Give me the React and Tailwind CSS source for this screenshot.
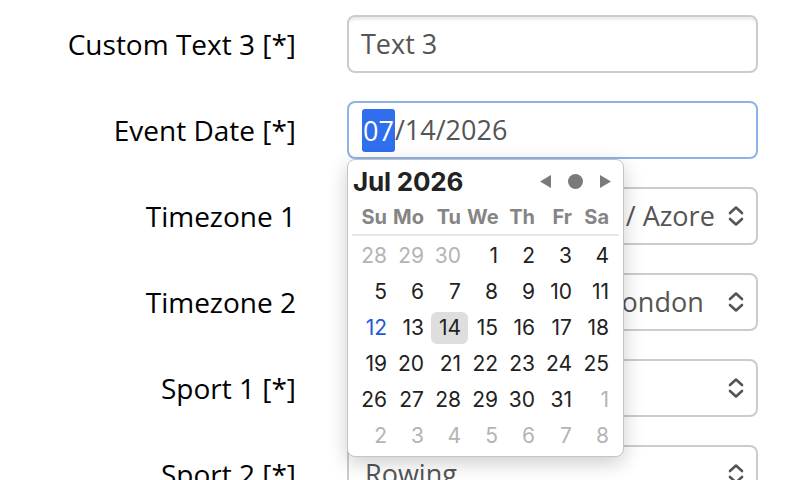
import React from "react";

const Chevron = () => (
  <svg width="16" height="22" viewBox="0 0 16 22" fill="none" stroke="#555" strokeWidth="2.6" strokeLinecap="round" strokeLinejoin="round">
    <path d="M2 8 L8 2.5 L14 8" />
    <path d="M2 14 L8 19.5 L14 14" />
  </svg>
);

const Row = ({ label, children }) => (
  <div className="flex items-center h-[58px]">
    <div className="w-[297px] text-right text-[28px] text-black pr-[1px] whitespace-nowrap">{label}</div>
    <div className="ml-[50px] w-[411px] h-full">{children}</div>
  </div>
);

const SelectBox = ({ value }) => (
  <div className="h-full w-full rounded-lg border-2 border-[#cccccc] bg-white flex items-center pl-[16px] pr-[12px]">
    <div className="flex-1 overflow-hidden whitespace-nowrap text-[#555] text-[27px]">{value}</div>
    <div className="ml-[12px]"><Chevron /></div>
  </div>
);

const weeks = [
  [["28", "o"], ["29", "o"], ["30", "o"], ["1"], ["2"], ["3"], ["4"]],
  [["5"], ["6"], ["7"], ["8"], ["9"], ["10"], ["11"]],
  [["12", "t"], ["13"], ["14", "s"], ["15"], ["16"], ["17"], ["18"]],
  [["19"], ["20"], ["21"], ["22"], ["23"], ["24"], ["25"]],
  [["26"], ["27"], ["28"], ["29"], ["30"], ["31"], ["1", "o"]],
  [["2", "o"], ["3", "o"], ["4", "o"], ["5", "o"], ["6", "o"], ["7", "o"], ["8", "o"]],
];

export default function App() {
  return (
    <div className="relative w-[802px] h-[480px] overflow-hidden bg-white" style={{ fontFamily: '"Open Sans", sans-serif' }}>
      <div className="flex flex-col gap-[28px] pt-[15px]">
        <Row label="Custom Text 3 [*]">
          <div className="h-full w-full rounded-lg border-2 border-[#cccccc] bg-white shadow-[inset_0_6px_3px_-3px_rgba(0,0,0,0.08)] flex items-center pl-[12px] text-[27px] text-[#555]">
            Text 3
          </div>
        </Row>
        <Row label="Event Date [*]">
          <div className="h-full w-full rounded-lg border-2 border-[#8db4e6] bg-white flex items-center pl-[13px] text-[27px] text-[#555]">
            <span className="bg-[#2f6fed] text-white rounded-[3px] px-[1px] leading-[43px]">07</span>
            <span>/14/2026</span>
          </div>
        </Row>
        <Row label="Timezone 1">
          <SelectBox value="(GMT-01:00) Atlantic / Azores" />
        </Row>
        <Row label="Timezone 2">
          <SelectBox value="(GMT+00) Europe / London" />
        </Row>
        <Row label="Sport 1 [*]">
          <SelectBox value="" />
        </Row>
        <Row label="Sport 2 [*]">
          <SelectBox value="Rowing" />
        </Row>
      </div>

      <div
        className="absolute left-[347px] top-[159px] w-[277px] h-[298px] bg-white rounded-lg border border-[#c4c4c4] shadow-[0_6px_20px_rgba(0,0,0,0.2)]"
        style={{ fontFamily: 'Inter, "Noto Sans", sans-serif' }}
      >
        <div className="flex items-center h-[42px] pl-[5px] pr-[12px]">
          <div className="flex-1 text-[26px] font-bold text-[#222] tracking-[-0.2px]">Jul 2026</div>
          <div className="flex items-center gap-[17px]">
            <svg width="11" height="13" viewBox="0 0 11 13"><path d="M0 6.5 L11 0 L11 13 Z" fill="#7a7a7a" /></svg>
            <svg width="15" height="15" viewBox="0 0 15 15"><circle cx="7.5" cy="7.5" r="7.5" fill="#7a7a7a" /></svg>
            <svg width="11" height="13" viewBox="0 0 11 13"><path d="M11 6.5 L0 0 L0 13 Z" fill="#7a7a7a" /></svg>
          </div>
        </div>
        <div className="mx-[4px] border-b-2 border-[#e6e6e6] grid grid-cols-[repeat(7,37px)] pl-[4px] pb-[5px] pt-[3px]">
          {["Su", "Mo", "Tu", "We", "Th", "Fr", "Sa"].map((d) => (
            <div key={d} className="text-right pr-[6px] text-[20px] font-bold text-[#858585] leading-[24px] whitespace-nowrap">{d}</div>
          ))}
        </div>
        <div className="grid grid-cols-[repeat(7,37px)] gap-y-[4px] pl-[9px] pt-[4px]">
          {weeks.flat().map(([n, k], i) => (
            <div
              key={i}
              className={
                "h-[32px] flex items-center justify-end pr-[7px] text-[21px] rounded-md " +
                (k === "o" ? "text-[#b4b4b4]" : k === "t" ? "text-[#1f5ad6]" : "text-[#222]") +
                (k === "s" ? " bg-[#dedede]" : "")
              }
            >
              {n}
            </div>
          ))}
        </div>
      </div>
    </div>
  );
}
